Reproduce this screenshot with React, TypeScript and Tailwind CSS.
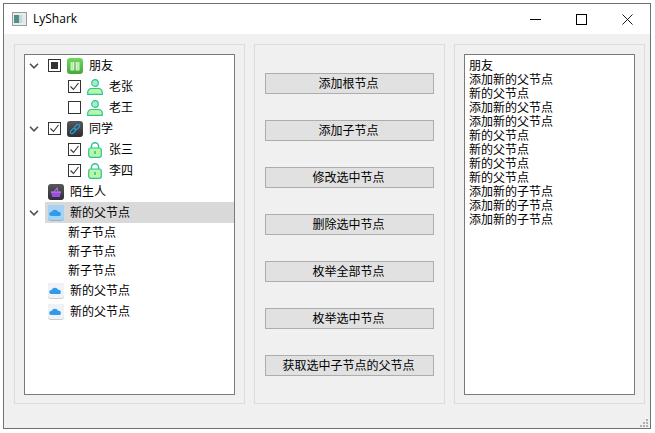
import React from 'react';

const FONT = "font-['Liberation_Sans','Noto_Sans_CJK_SC',sans-serif]";

const buttons = ['添加根节点', '添加子节点', '修改选中节点', '删除选中节点', '枚举全部节点', '枚举选中节点', '获取选中子节点的父节点'];

const logLines = ['朋友', '添加新的父节点', '新的父节点', '添加新的父节点', '添加新的父节点', '新的父节点', '新的父节点', '新的父节点', '新的父节点', '添加新的子节点', '添加新的子节点', '添加新的子节点'];

const Chevron = () => (
    <svg width="10" height="6" viewBox="0 0 10 6" fill="none">
        <path d="M1 .8l4 4 4-4" stroke="#505050" strokeWidth="1.6" />
    </svg>
);

const Check = ({ state }: { state: 'on' | 'off' | 'partial' }) => (
    <div className="w-[13px] h-[13px] border border-[#333333] bg-white flex items-center justify-center shrink-0">
        {state === 'partial' && <div className="w-[7px] h-[7px] bg-[#333333]" />}
        {state === 'on' && (
            <svg width="11" height="11" viewBox="0 0 11 11" fill="none">
                <path d="M1.5 5.5l3 3 5-6.5" stroke="#333333" strokeWidth="1.1" />
            </svg>
        )}
    </div>
);

const BookIcon = () => (
    <svg width="16" height="16" viewBox="0 0 16 16" className="shrink-0">
        <defs>
            <linearGradient id="bookBg" x1="0" y1="0" x2="0" y2="1">
                <stop offset="0" stopColor="#72d860" />
                <stop offset="1" stopColor="#44a83c" />
            </linearGradient>
        </defs>
        <rect width="16" height="16" rx="3" fill="url(#bookBg)" />
        <path d="M3.5 4h3.8v8.5H3.5zM8.7 4h3.8v8.5H8.7z" fill="#d4f2cc" />
        <path d="M5.2 4v8.5M10.8 4v8.5" stroke="#9edc90" strokeWidth="0.7" />
    </svg>
);

const PersonIcon = () => (
    <svg width="16" height="16" viewBox="0 0 16 16" className="shrink-0">
        <circle cx="8" cy="4" r="3.3" fill="#a5efc4" stroke="#2cc49a" strokeWidth="1.2" />
        <path d="M.7 15.3v-2.1A3.7 3.7 0 0 1 4.4 9.5h7.2a3.7 3.7 0 0 1 3.7 3.7v2.1z" fill="#b9f7a4" stroke="#2cc49a" strokeWidth="1.2" />
    </svg>
);

const LockIcon = () => (
    <svg width="14" height="16" viewBox="0 0 14 16" className="shrink-0">
        <path d="M3.4 7V4.3a3.6 3.6 0 0 1 7.2 0V7" fill="none" stroke="#2cc49a" strokeWidth="1.4" />
        <rect x="0.7" y="6" width="12.6" height="9.3" rx="2" fill="#b9f7a4" stroke="#2cc49a" strokeWidth="1.2" />
        <rect x="6.2" y="9" width="1.6" height="3" fill="#2cc49a" />
    </svg>
);

const LinkIcon = () => (
    <svg width="16" height="16" viewBox="0 0 16 16" className="shrink-0">
        <defs>
            <linearGradient id="linkBg" x1="0" y1="0" x2="0" y2="1">
                <stop offset="0" stopColor="#58585a" />
                <stop offset="1" stopColor="#2e2e30" />
            </linearGradient>
        </defs>
        <rect width="16" height="16" rx="3" fill="url(#linkBg)" />
        <g fill="none" stroke="#2a9ad0" strokeWidth="1.1">
            <rect x="-1.6" y="-3.2" width="3.2" height="6.4" rx="1.6" transform="translate(6 10) rotate(45)" />
            <rect x="-1.6" y="-3.2" width="3.2" height="6.4" rx="1.6" transform="translate(10 6) rotate(45)" />
        </g>
    </svg>
);

const BasketIcon = () => (
    <svg width="16" height="16" viewBox="0 0 16 16" className="shrink-0">
        <defs>
            <linearGradient id="basketBg" x1="0" y1="0" x2="0" y2="1">
                <stop offset="0" stopColor="#58585a" />
                <stop offset="1" stopColor="#2e2e30" />
            </linearGradient>
        </defs>
        <rect width="16" height="16" rx="3" fill="url(#basketBg)" />
        <path d="M3 8h10l-1.2 5H4.2z" fill="#9a4fe0" />
        <path d="M2.8 8h10.4" stroke="#c08af0" strokeWidth="1" />
        <path d="M6 8l3.5-4.5M10 8L9 4" stroke="#b070ee" strokeWidth="1.1" />
    </svg>
);

const CloudIcon = ({ tile, edge }: { tile: string; edge: string }) => (
    <svg width="16" height="16" viewBox="0 0 16 16" className="shrink-0">
        <rect width="16" height="16" rx="3" fill={edge} />
        <rect width="16" height="15" rx="3" fill={tile} />
        <path d="M3.2 11a2 2 0 0 1 0-4 .6.6 0 0 0 .5-.3 3.6 3.6 0 0 1 6.5.2 2.2 2.2 0 0 1 2.6 2.1 2 2 0 0 1-.8 2z" fill="#2f9bea" />
    </svg>
);

const Row = ({ children, tall = true, indent = '' }: { children: React.ReactNode; tall?: boolean; indent?: string }) => (
    <div className={`flex items-center ${tall ? 'h-[21px]' : 'h-[19px]'} ${indent}`}>{children}</div>
);

const Label = ({ text, className = '' }: { text: string; className?: string }) => (
    <span className={`text-[12px] leading-[14px] text-black whitespace-nowrap ${className}`}>{text}</span>
);

const Expander = () => (
    <div className="w-[14px] ml-[2px] mr-[7px] flex justify-center shrink-0">
        <Chevron />
    </div>
);

const App: React.FC = () => {
    return (
        <div className={`w-[655px] h-[433px] bg-white pt-[3px] pl-[3px] overflow-hidden ${FONT}`}>
            <div className="relative w-[648px] h-[426px] border border-[#707070] bg-[#f0f0f0] flex flex-col">
                {/* title bar */}
                <div className="h-[30px] bg-white flex items-center shrink-0">
                    <svg width="15" height="14" viewBox="0 0 15 14" className="ml-[8px] shrink-0">
                        <rect x="0.5" y="0.5" width="14" height="13" fill="#e8eef0" stroke="#9a9a9a" />
                        <rect x="2" y="3" width="5" height="8" fill="#4f8f8a" />
                        <rect x="7" y="3" width="3" height="8" fill="#c4d8cc" />
                        <rect x="10" y="3" width="3" height="8" fill="#dfe8f0" />
                    </svg>
                    <span className="ml-[6px] text-[12px] text-black font-['Open_Sans','Liberation_Sans',sans-serif]">LyShark</span>
                    <div className="ml-auto flex items-center gap-[35px] mr-[17px]">
                        <svg width="11" height="11" viewBox="0 0 11 11"><path d="M0 5.5h11" stroke="#000" /></svg>
                        <svg width="11" height="11" viewBox="0 0 11 11"><rect x="0.5" y="0.5" width="10" height="10" fill="none" stroke="#000" /></svg>
                        <svg width="11" height="11" viewBox="0 0 11 11"><path d="M0.5 0.5l10 10M10.5 0.5l-10 10" stroke="#000" strokeWidth="0.9" /></svg>
                    </div>
                </div>

                {/* panels */}
                <div className="flex gap-[9px] pl-[10px] pt-[10px]">
                    <div className="w-[231px] h-[360px] border border-[#dcdcdc] p-[9px]">
                        <div className="h-[341px] bg-white border border-[#7a7a7a]">
                            <Row><Expander /><Check state="partial" /><div className="w-[6px]" /><BookIcon /><Label text="朋友" className="ml-[6px]" /></Row>
                            <Row indent="pl-[43px]"><Check state="on" /><div className="w-[6px]" /><PersonIcon /><Label text="老张" className="ml-[6px]" /></Row>
                            <Row indent="pl-[43px]"><Check state="off" /><div className="w-[6px]" /><PersonIcon /><Label text="老王" className="ml-[6px]" /></Row>
                            <Row><Expander /><Check state="on" /><div className="w-[6px]" /><LinkIcon /><Label text="同学" className="ml-[6px]" /></Row>
                            <Row indent="pl-[43px]"><Check state="on" /><div className="w-[7px]" /><LockIcon /><Label text="张三" className="ml-[7px]" /></Row>
                            <Row indent="pl-[43px]"><Check state="on" /><div className="w-[7px]" /><LockIcon /><Label text="李四" className="ml-[7px]" /></Row>
                            <Row indent="pl-[23px]"><BasketIcon /><Label text="陌生人" className="ml-[6px]" /></Row>
                            <Row>
                                <Expander />
                                <div className="flex-1 h-full bg-[#d9d9d9] flex items-center pl-[3px] -ml-[3px]">
                                    <CloudIcon tile="#a6d2f4" edge="#8fb4d4" />
                                    <Label text="新的父节点" className="ml-[6px]" />
                                </div>
                            </Row>
                            <Row indent="pl-[43px]" tall={false}><Label text="新子节点" /></Row>
                            <Row indent="pl-[43px]" tall={false}><Label text="新子节点" /></Row>
                            <Row indent="pl-[43px]" tall={false}><Label text="新子节点" /></Row>
                            <Row indent="pl-[23px]"><CloudIcon tile="#f0f2f5" edge="#c8ccd2" /><Label text="新的父节点" className="ml-[6px]" /></Row>
                            <Row indent="pl-[23px]"><CloudIcon tile="#f0f2f5" edge="#c8ccd2" /><Label text="新的父节点" className="ml-[6px]" /></Row>
                        </div>
                    </div>

                    <div className="w-[191px] h-[360px] border border-[#dcdcdc] pt-[28px] px-[10px] flex flex-col gap-[26px]">
                        {buttons.map((b) => (
                            <button key={b} className="h-[21px] w-[169px] shrink-0 border border-[#adadad] bg-[#e1e1e1] text-[12px] leading-[14px] text-black flex items-center justify-center pr-[2px] pt-[1px]">
                                {b}
                            </button>
                        ))}
                    </div>

                    <div className="w-[191px] h-[360px] border border-[#dcdcdc] p-[9px]">
                        <div className="h-[341px] bg-white border border-[#7a7a7a] px-[4px] pt-[4px]">
                            {logLines.map((l, i) => (
                                <div key={i} className="h-[14px] text-[12px] leading-[14px] text-black whitespace-nowrap">{l}</div>
                            ))}
                        </div>
                    </div>
                </div>

                {/* size grip */}
                <svg width="9" height="9" viewBox="0 0 9 9" className="absolute right-[2px] bottom-[1px]" fill="#b0b0b0">
                    <rect x="7" y="1" width="2" height="2" />
                    <rect x="4" y="4" width="2" height="2" />
                    <rect x="7" y="4" width="2" height="2" />
                    <rect x="1" y="7" width="2" height="2" />
                    <rect x="4" y="7" width="2" height="2" />
                    <rect x="7" y="7" width="2" height="2" />
                </svg>
            </div>
        </div>
    );
};

export default App;
